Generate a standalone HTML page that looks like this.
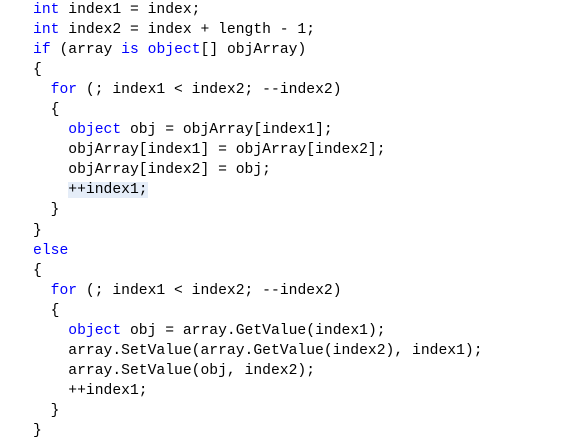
<!DOCTYPE html>
<html><head><style>
html,body{margin:0;padding:0;background:#fff;width:570px;height:440px;overflow:hidden}
pre{position:absolute;left:33px;top:0px;margin:0;font-family:"Liberation Mono","DejaVu Sans Mono",monospace;font-size:14.7px;line-height:20.05px;color:#000}
.k{color:#0000ff}
.h{background:#e5edf8}
</style></head><body>
<pre><span class="k">int</span> index1 = index;
<span class="k">int</span> index2 = index + length - 1;
<span class="k">if</span> (array <span class="k">is</span> <span class="k">object</span>[] objArray)
{
  <span class="k">for</span> (; index1 &lt; index2; --index2)
  {
    <span class="k">object</span> obj = objArray[index1];
    objArray[index1] = objArray[index2];
    objArray[index2] = obj;
    <span class="h">++index1;</span>
  }
}
<span class="k">else</span>
{
  <span class="k">for</span> (; index1 &lt; index2; --index2)
  {
    <span class="k">object</span> obj = array.GetValue(index1);
    array.SetValue(array.GetValue(index2), index1);
    array.SetValue(obj, index2);
    ++index1;
  }
}</pre>
</body></html>
